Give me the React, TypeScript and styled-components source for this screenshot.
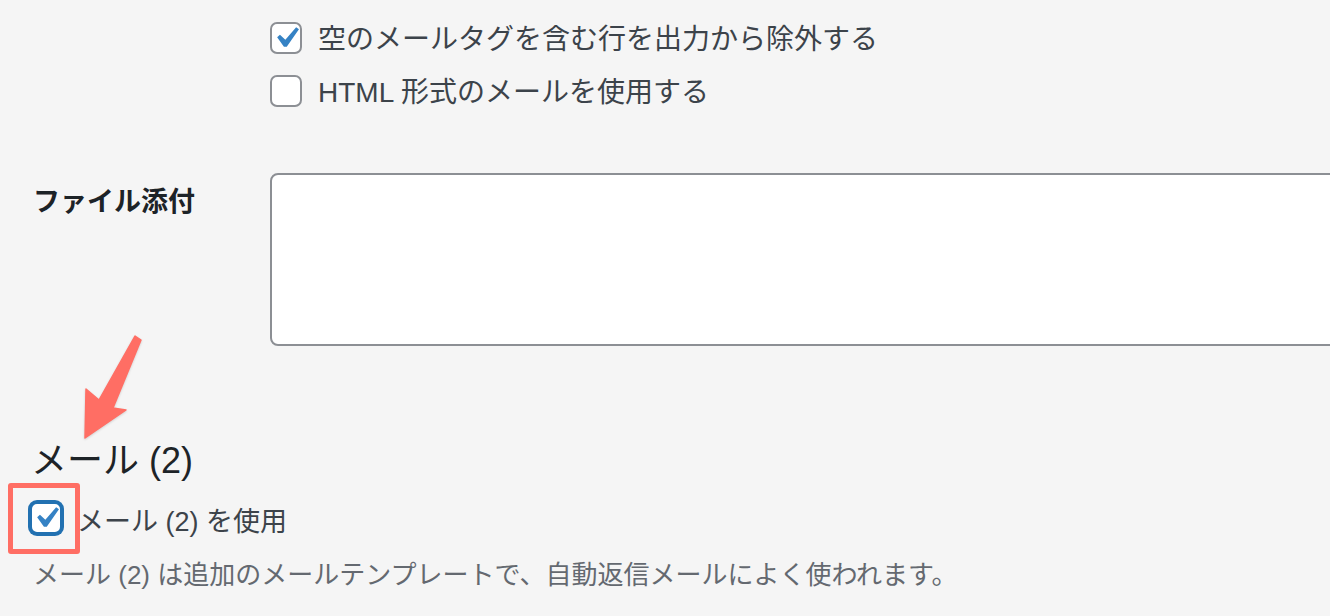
import { createGlobalStyle, styled } from "styled-components";

const GlobalStyle = createGlobalStyle`
  html, body {
    margin: 0;
    padding: 0;
    background: #f5f5f5;
    overflow: hidden;
  }
  body {
    font-family: "Liberation Sans", "Noto Sans CJK JP", sans-serif;
    color: #3c434a;
  }
`;

const CheckIcon = () => (
  <svg viewBox="0 0 20 20" width="42" height="42">
    <path
      fill="#3582c4"
      d="M14.83 4.89l1.34.94-5.81 8.38H9.02L5.78 9.67l1.34-1.25 2.57 2.4z"
    />
  </svg>
);

const Arrow = () => (
  <ArrowSvg viewBox="0 0 66 112" width="66" height="112">
    <polygon
      fill="#ff6e64"
      strokeLinejoin="round"
      stroke="#ff6e64"
      strokeWidth="1.5"
      points="55,4 61,8 33,76 46,78 5,106 6,57 19,68"
    />
  </ArrowSvg>
);

const App = () => {
  return (
    <Page>
      <GlobalStyle />
      <OptionList>
        <CheckRow>
          <Checkbox>
            <CheckIcon />
          </Checkbox>
          <Label>空のメールタグを含む行を出力から除外する</Label>
        </CheckRow>
        <CheckRow>
          <Checkbox />
          <Label>HTML 形式のメールを使用する</Label>
        </CheckRow>
      </OptionList>

      <FieldRow>
        <FieldLabel>ファイル添付</FieldLabel>
        <TextArea />
      </FieldRow>

      <Heading>メール (2)</Heading>
      <UseRow>
        <FocusBox>
          <Checkbox $focused>
            <CheckIcon />
          </Checkbox>
          <Highlight />
        </FocusBox>
        <UseLabel>メール (2) を使用</UseLabel>
      </UseRow>
      <Description>
        メール (2) は追加のメールテンプレートで、自動返信メールによく使われます。
      </Description>
      <Arrow />
    </Page>
  );
};

export default App;

const Page = styled.div`
  position: relative;
  width: 1330px;
  height: 616px;
  box-sizing: border-box;
  padding: 22px 0 0 33px;
`;

const OptionList = styled.div`
  display: flex;
  flex-direction: column;
  gap: 21px;
  margin-left: 237px;
`;

const CheckRow = styled.label`
  display: flex;
  align-items: center;
  height: 32px;
  gap: 16px;
`;

const Checkbox = styled.span<{ $focused?: boolean }>`
  display: flex;
  align-items: center;
  justify-content: center;
  width: 32px;
  height: 32px;
  box-sizing: border-box;
  flex-shrink: 0;
  background: #fff;
  border: 2px solid ${(p) => (p.$focused ? "#2271b1" : "#8c8f94")};
  border-radius: 7px;
  box-shadow: ${(p) => (p.$focused ? "0 0 0 2px #2271b1" : "none")};
  svg {
    flex-shrink: 0;
  }
`;

const Label = styled.span`
  font-size: 28px;
  line-height: 32px;
  color: #3c434a;
  padding-top: 3px;
`;

const FieldRow = styled.div`
  display: flex;
  margin-top: 66px;
`;

const FieldLabel = styled.div`
  width: 237px;
  flex-shrink: 0;
  font-size: 27px;
  font-weight: bold;
  line-height: 36px;
  color: #1d2327;
  padding-top: 11px;
`;

const TextArea = styled.div`
  width: 1100px;
  height: 173px;
  flex-shrink: 0;
  box-sizing: border-box;
  background: #fff;
  border: 2px solid #8c8f94;
  border-radius: 8px;
`;

const Heading = styled.h2`
  margin: 94px 0 0 -2px;
  font-size: 36px;
  font-weight: normal;
  line-height: 42px;
  color: #1d2327;
`;

const UseRow = styled.label`
  display: flex;
  align-items: center;
  height: 32px;
  gap: 15px;
  margin: 20px 0 0 -3px;
`;

const FocusBox = styled.span`
  position: relative;
  display: flex;
`;

const Highlight = styled.span`
  position: absolute;
  left: -22px;
  top: -19px;
  width: 72px;
  height: 71px;
  box-sizing: border-box;
  border: 5px solid #ff6e64;
  border-radius: 3px;
`;

const UseLabel = styled.span`
  font-size: 27px;
  line-height: 32px;
  color: #3c434a;
  padding-top: 8px;
`;

const Description = styled.p`
  margin: 23px 0 0;
  font-size: 26px;
  line-height: 36px;
  color: #646970;
`;

const ArrowSvg = styled.svg`
  position: absolute;
  left: 80px;
  top: 332px;
  filter: drop-shadow(0 1px 1px rgba(0, 0, 0, 0.15));
`;
